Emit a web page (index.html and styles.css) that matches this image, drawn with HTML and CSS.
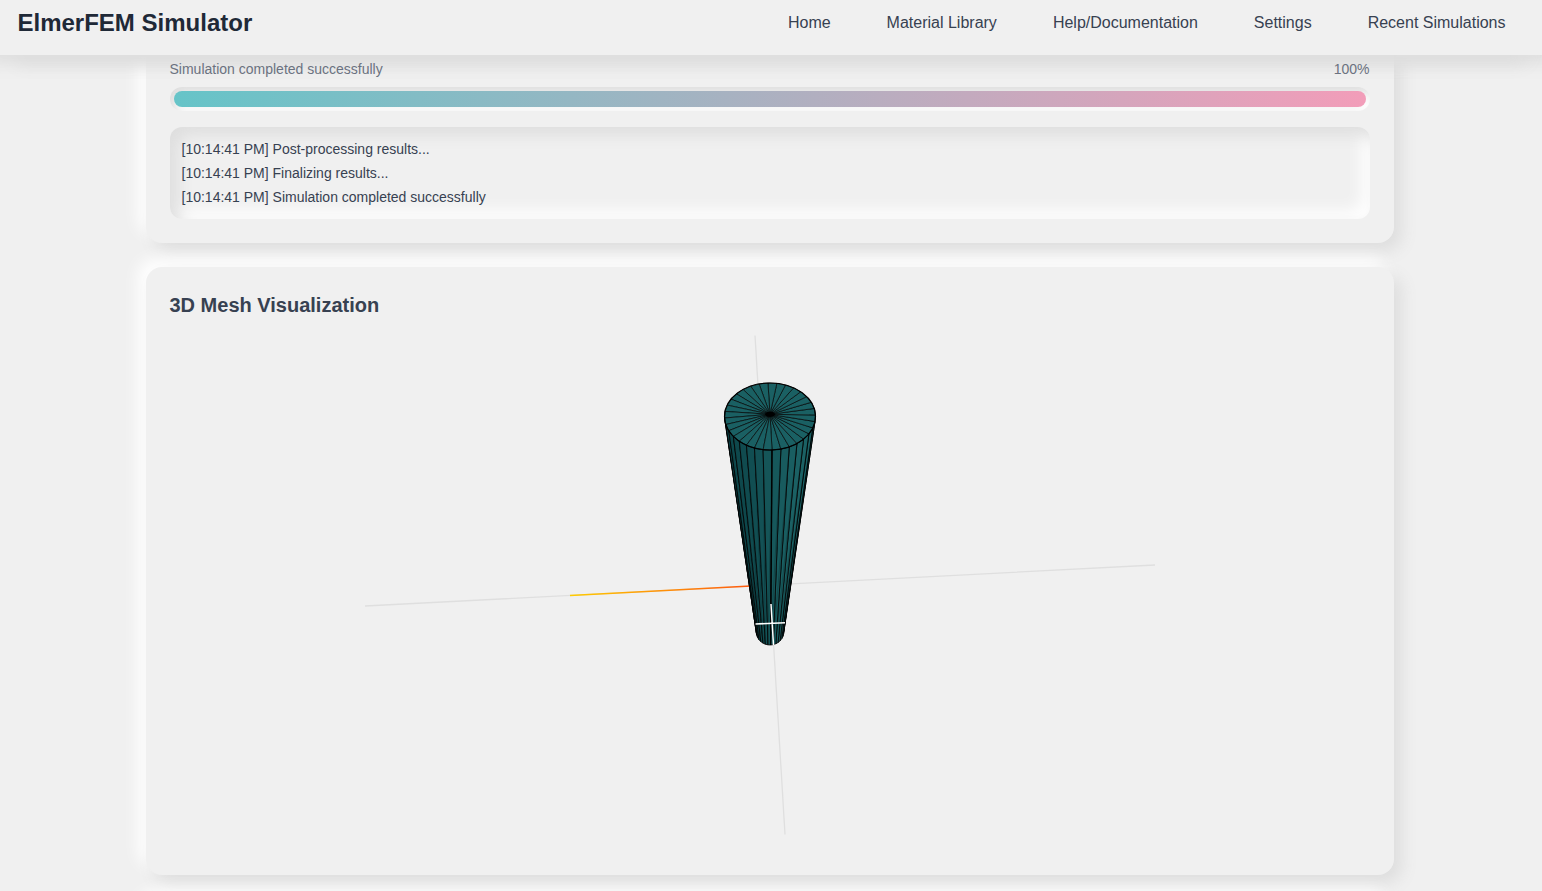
FILE: index.html
```html
<!DOCTYPE html>
<html lang="en">
<head>
<meta charset="utf-8">
<title>ElmerFEM Simulator</title>
<link rel="stylesheet" href="styles.css">
</head>
<body>
<header class="topbar">
  <h1 class="brand">ElmerFEM Simulator</h1>
  <nav class="nav"><a>Home</a><a>Material Library</a><a>Help/Documentation</a><a>Settings</a><a>Recent Simulations</a></nav>
</header>
<main class="content">
  <section class="card progress-card">
    <div class="status"><span>Simulation completed successfully</span><span>100%</span></div>
    <div class="track"><div class="fill"></div></div>
    <div class="log">
      <div>[10:14:41 PM] Post-processing results...</div>
      <div>[10:14:41 PM] Finalizing results...</div>
      <div>[10:14:41 PM] Simulation completed successfully</div>
    </div>
  </section>
  <section class="card mesh-card">
    <h2 class="title">3D Mesh Visualization</h2>
    <svg class="viewport" viewBox="170 335 1200 500">
      <defs>
        <linearGradient id="axis" gradientUnits="userSpaceOnUse" x1="570" y1="0" x2="750" y2="0"><stop offset="0" stop-color="#ffcc00"/><stop offset="1" stop-color="#ff5a10"/></linearGradient>
      </defs>
      <g stroke="#dfdfdf" stroke-width="1.3"><path d="M365 606 1155 565M755 335.500 785 834.500"/></g>
      <path d="M570 595.500 751 586" stroke="url(#axis)" stroke-width="1.5"/>
      <g id="mesh" stroke="#000" stroke-linejoin="round"></g>
      <path d="M755.500 624 785 622.700M771 604 773.500 645" stroke="#fff" stroke-width="1.5"/>
    </svg>
  </section>
  <section class="card next-card"></section>
</main>
<script src="mesh.js"></script>
</body>
</html>
```
FILE: styles.css
```css
* { box-sizing: border-box; }
body {
  margin: 0;
  height: 891px;
  overflow: hidden;
  background: #f0f0f0;
  font-family: "Liberation Sans", Arial, sans-serif;
  color: #374151;
}
.topbar {
  position: relative;
  z-index: 2;
  height: 55px;
  padding: 0 36.500px 10px 17.500px;
  display: flex;
  align-items: center;
  justify-content: space-between;
  background: #f0f0f0;
  box-shadow: -16px 8px 16px #dedede, 16px 8px 16px #dedede;
}
.brand { margin: 0; font-size: 24px; line-height: 32px; color: #1f2937; }
.nav { display: flex; gap: 56px; font-size: 16px; line-height: 24px; }
.content {
  width: 1248px;
  margin-left: 146px;
  display: flex;
  flex-direction: column;
  gap: 24px;
}
.card {
  flex: none;
  padding: 24px;
  border-radius: 16px;
  background: #f0f0f0;
  box-shadow: 8px 8px 16px #dedede, -8px -8px 16px #fff;
}
.progress-card { margin-top: -20px; height: 208px; }
.status {
  position: relative;
  z-index: 3;
  display: flex;
  justify-content: space-between;
  margin: 0 .5px 0 -.5px;
  font-size: 14px;
  line-height: 20px;
  color: #6b7280;
}
.track {
  height: 24px;
  margin-top: 8px;
  padding: 4px;
  border-radius: 12px;
  box-shadow: inset 4px 4px 8px #dedede, inset -4px -4px 8px #fff;
}
.fill { height: 16px; border-radius: 8px; background: linear-gradient(90deg, #66c4c8, #f29db9); }
.log {
  height: 92px;
  margin-top: 16px;
  padding: 12px 11.500px;
  border-radius: 12px;
  font-size: 14px;
  line-height: 20px;
  display: flex;
  flex-direction: column;
  gap: 4px;
  box-shadow: inset 8px 8px 16px #dedede, inset -8px -8px 16px #fff;
}
.mesh-card { height: 608px; }
.title { margin: 0 0 16px -.5px; font-size: 20px; line-height: 28px; }
.viewport { display: block; width: 1200px; height: 500px; }
.next-card { height: 200px; }
```
FILE: mesh.js
```js
// Draw the tapered view of a 32-segment cylinder with its triangle edges.
(() => {
  const SEGMENTS = 32;
  const PHASE = 0.045;
  const point = (i, cx, cy, rx, ry) => {
    const a = i * 2 * Math.PI / SEGMENTS + PHASE;
    return [cx + rx * Math.sin(a), cy + ry * Math.cos(a)];
  };
  const rim = i => point(i, 770, 416.5, 45.5, 33.5);
  const base = i => point(i, 770, 632, 13.7, 13);
  const polygon = (points, fill, width) =>
    `<polygon points="${points.map(p => p.map(v => v.toFixed(2))).join(' ')}" fill="${fill}" stroke-width="${width}"/>`;
  let out = '';
  for (let k = 9; k >= 0; k--) {
    for (const i of k ? [k, -k] : [0]) {
      const t = Math.min(1, Math.max(0, (i + 5) / 8));
      const fill = `rgb(${14 + 13 * t},${72 + 25 * t},${76 + 24 * t})`;
      const [a, b, c, d] = [rim(i), rim(i + 1), base(i + 1), base(i)];
      out += polygon([a, b, c, d], fill, 0.8);
      out += `<path d="M${b}L${d}" stroke-width="0.5" stroke-opacity="0.4"/>`;
    }
  }
  for (let i = 0; i < SEGMENTS; i++) {
    out += polygon([[770, 414.3], rim(i), rim(i + 1)], '#1a6063', 0.65);
  }
  out += '<ellipse cx="770" cy="416.5" rx="45.5" ry="33.5" fill="none" stroke-width="1.2"/>';
  out += '<ellipse cx="770" cy="414.3" rx="4.5" ry="2"/>';
  out += `<path d="M${rim(0)}L${base(0)}" stroke-width="1.3"/>`;
  document.getElementById('mesh').innerHTML = out;
})();
```
